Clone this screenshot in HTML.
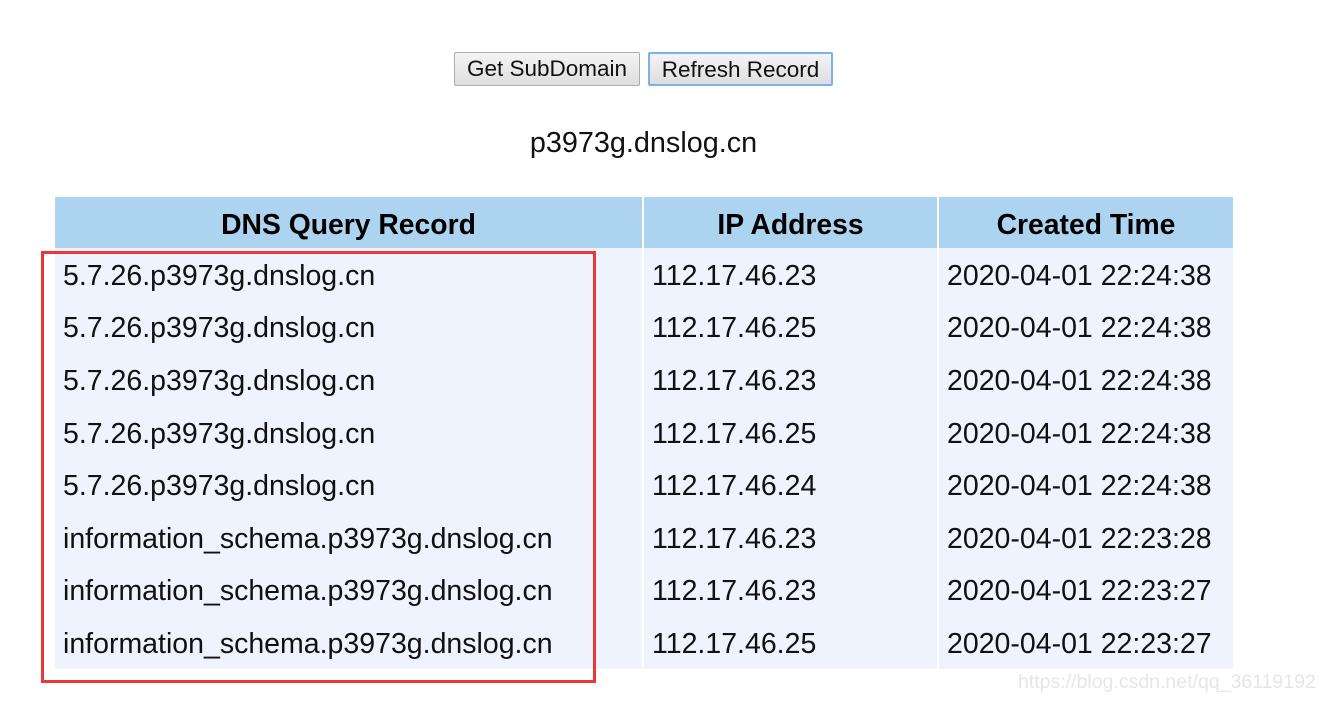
<!DOCTYPE html>
<html><head><style>
body{margin:0;background:#fff;font-family:"Liberation Sans",sans-serif;width:1334px;height:705px;position:relative;overflow:hidden}
.btn{position:absolute;top:52px;height:34px;box-sizing:border-box;border:1px solid #adadad;background:linear-gradient(#f4f4f4,#dedede);font-size:22.5px;line-height:32px;text-align:center;color:#111;border-radius:2px}
.sub{position:absolute;left:0;width:1287px;top:127px;text-align:center;font-size:28.8px;color:#111}
table{position:absolute;left:55px;top:197px;border-collapse:separate;border-spacing:2px 0;margin-left:-2px}
th{background:#acd4f0;height:51px;font-size:28.3px;font-weight:bold;color:#000;padding:3px 0 0 0;box-sizing:border-box}
td{background:#eef3fd;height:52.6px;font-size:28.5px;color:#111;padding:4px 0 0 8px;box-sizing:border-box}
.box{position:absolute;left:41px;top:251px;width:555px;height:432px;box-sizing:border-box;border:3px solid #ee3636}
.wm{position:absolute;left:1018px;top:671px;font-size:19.5px;color:#e6e6e6}
</style></head><body>
<div class="btn" style="left:454px;width:186px">Get SubDomain</div>
<div class="btn" style="left:648px;width:185px;border:2px solid #7eb0ef">Refresh Record</div>
<div class="sub">p3973g.dnslog.cn</div>
<table>
<tr><th style="width:587px">DNS Query Record</th><th style="width:293px">IP Address</th><th style="width:294px">Created Time</th></tr>
<tr><td>5.7.26.p3973g.dnslog.cn</td><td>112.17.46.23</td><td>2020-04-01 22:24:38</td></tr>
<tr><td>5.7.26.p3973g.dnslog.cn</td><td>112.17.46.25</td><td>2020-04-01 22:24:38</td></tr>
<tr><td>5.7.26.p3973g.dnslog.cn</td><td>112.17.46.23</td><td>2020-04-01 22:24:38</td></tr>
<tr><td>5.7.26.p3973g.dnslog.cn</td><td>112.17.46.25</td><td>2020-04-01 22:24:38</td></tr>
<tr><td>5.7.26.p3973g.dnslog.cn</td><td>112.17.46.24</td><td>2020-04-01 22:24:38</td></tr>
<tr><td>information_schema.p3973g.dnslog.cn</td><td>112.17.46.23</td><td>2020-04-01 22:23:28</td></tr>
<tr><td>information_schema.p3973g.dnslog.cn</td><td>112.17.46.23</td><td>2020-04-01 22:23:27</td></tr>
<tr><td>information_schema.p3973g.dnslog.cn</td><td>112.17.46.25</td><td>2020-04-01 22:23:27</td></tr>
</table>
<div class="box"></div>
<div class="wm">https://blog.csdn.net/qq_36119192</div>
</body></html>
